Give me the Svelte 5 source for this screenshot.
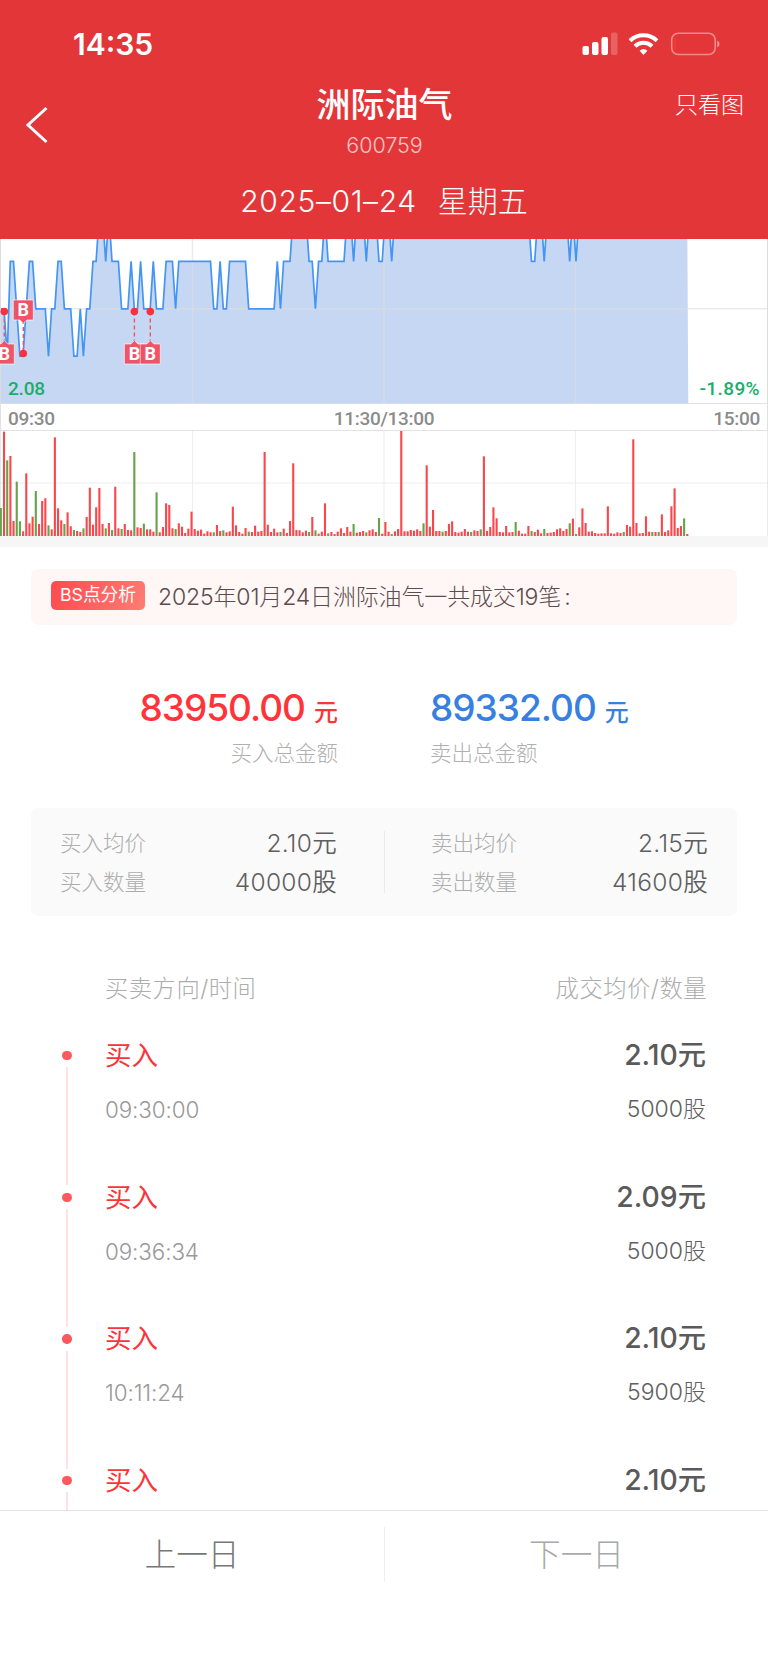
<script lang="ts">
    type Trade = { side: string, price: string, time?: string, amount?: string };

    const STEP = 3.178;
    const BASE = 164.5;
    const LEVEL = 47.35;

    // [price in ticks above 2.08, minutes it held]
    const runs: [number, number][] = [
        [2, 2], [1, 1], [3, 2], [2, 1], [1, 2], [2, 1], [3, 2], [2, 4], [1, 1], [2, 2],
        [3, 2], [2, 3], [1, 2], [2, 1], [1, 1], [2, 2], [3, 2], [4, 2], [3, 1], [4, 1],
        [3, 3], [2, 3], [3, 1], [2, 2], [3, 1], [2, 3], [3, 1], [2, 3], [3, 3], [2, 1],
        [3, 11], [2, 2], [3, 1], [2, 2], [3, 6], [2, 9], [3, 1], [2, 1], [3, 3], [4, 5],
        [3, 2], [2, 1], [3, 2], [4, 1], [3, 6], [4, 2], [3, 1], [4, 3], [3, 1], [4, 3],
        [3, 2], [4, 2], [3, 1], [4, 43], [3, 2], [4, 2], [3, 1], [4, 7], [3, 1], [4, 1],
        [3, 1], [4, 35]
    ];

    // volume per minute, negative = falling minute
    const volumes = [
        -84, 313, -227, 240, 45, -163, -44, 14, 188, 38, 58, -135, 36, 105, 113, -32, 20, 296, 83, 47,
        -36, 71, 29, -18, 15, 12, -23, 57, 145, 34, 86, 144, 36, -23, 39, -18, 148, 23, -21, 36,
        18, 17, -252, 26, 24, -37, 20, 20, 13, -131, 11, 27, 98, 93, 23, -21, 38, 28, 9, 22,
        73, 21, 16, 19, 7, 14, 11, -11, 33, 15, -17, 11, 14, 88, 32, 12, 7, 24, -13, 12,
        31, 13, 15, 252, 34, 12, 22, 11, -12, 22, 9, 45, 218, 18, 17, 11, 16, -12, 57, -17,
        7, 13, 98, -8, 12, 6, 13, 23, 9, 27, 13, -36, 10, 12, 15, -11, 17, 20, 12, -54,
        7, 42, 13, -6, 14, 21, 315, 14, 14, 18, 16, 20, 15, -38, 212, 28, 78, 15, 15, -13,
        15, 36, 44, 12, 10, 13, 21, 13, -12, 17, 15, -20, 239, 15, 27, 86, 53, 12, 11, 30,
        11, 12, -42, 16, 7, 7, 30, -15, 12, 19, 8, -21, 9, 10, 12, 20, 23, 15, 21, -38,
        52, -6, 26, 83, 39, 13, 14, 9, 7, 8, 8, 89, 8, 7, 11, 9, -12, 33, 28, 290,
        39, 8, 9, 59, 13, -12, 12, -12, 65, 12, 17, 89, 143, 24, 30, -53, 6
    ];

    const ticks = runs.flatMap(([tick, count]) => Array(count).fill(tick) as number[]);
    const points = ticks.map((tick, i) => `${(0.8 + i * STEP).toFixed(1)},${(BASE - tick * LEVEL).toFixed(1)}`).join(' ');
    const endX = 688.3;

    const markers = [
        { x: 4.3, dot: 72.5, tag: 'below' },
        { x: 23.3, dot: 114.5, tag: 'above' },
        { x: 134.4, dot: 72.5, tag: 'below' },
        { x: 150.3, dot: 72.5, tag: 'below' }
    ];

    const totals = [
        { label: '买入总金额', value: '83950.00', kind: 'buy' },
        { label: '卖出总金额', value: '89332.00', kind: 'sell' }
    ];

    const stats = [
        [{ label: '买入均价', value: '2.10元' }, { label: '买入数量', value: '40000股' }],
        [{ label: '卖出均价', value: '2.15元' }, { label: '卖出数量', value: '41600股' }]
    ];

    const trades: Trade[] = [
        { side: '买入', time: '09:30:00', price: '2.10元', amount: '5000股' },
        { side: '买入', time: '09:36:34', price: '2.09元', amount: '5000股' },
        { side: '买入', time: '10:11:24', price: '2.10元', amount: '5900股' },
        { side: '买入', price: '2.10元' }
    ];
</script>

<div class="screen">
    <header>
        <div class="status">
            <span class="clock">14:35</span>
            <svg class="status-icons" width="138" height="24" viewBox="0 0 138 24">
                <g fill="#fff">
                    <rect x="1.5" y="14" width="6.5" height="9" rx="2" />
                    <rect x="11" y="10" width="6.5" height="13" rx="2" />
                    <rect x="20.5" y="5" width="6.5" height="18" rx="2" />
                    <rect x="30" y="0.5" width="6.5" height="22.5" rx="2" opacity="0.22" />
                    <path d="M62.500 23 L58.600 18.700 A6 6 0 0 1 66.400 18.700 Z" />
                </g>
                <g fill="none" stroke="#fff" stroke-width="4">
                    <path d="M49 8.800 A19.500 19.500 0 0 1 76 8.800" />
                    <path d="M54 14.200 A12.200 12.200 0 0 1 71 14.200" />
                </g>
                <rect x="90.700" y="1.200" width="43.500" height="21.300" rx="6.500" fill="none" stroke="#fff" stroke-opacity="0.42" stroke-width="1.600" />
                <path d="M93.500 6 Q92.600 12 93.500 18 L94.700 18 L94.700 6 Z" fill="#ff3b30" />
                <path d="M136.300 8.500 Q138.500 9.500 138.500 12 Q138.500 14.500 136.300 15.500 Z" fill="#fff" fill-opacity="0.5" />
            </svg>
        </div>
        <div class="nav">
            <svg class="back" width="24" height="38" viewBox="0 0 24 38">
                <path d="M21.500 2 L3 19 L21.500 36" fill="none" stroke="#fff" stroke-width="3" />
            </svg>
            <div class="title">
                <h1>洲际油气</h1>
                <span class="code">600759</span>
            </div>
            <span class="only-chart">只看图</span>
        </div>
        <div class="date"><span class="day">2025–01–24</span><span>星期五</span></div>
    </header>

    <section class="chart">
        <div class="price">
            <svg width="768" height="165" viewBox="0 0 768 165">
                <polygon points="0.8,{BASE} {points} {endX},{BASE}" fill="#c6d7f4" />
                <path d="M0 69.800H768 M192.500 0V165 M384 0V165 M575.500 0V165" stroke="#ddd" stroke-opacity="0.6" stroke-width="1.500" />
                <polyline {points} fill="none" stroke="#4496f2" stroke-width="1.700" />
                <path d="M0.500 0V165 M767.500 0V165" stroke="#dcdcdc" />
                {#each markers as m}
                    {@const below = m.tag === 'below'}
                    {@const top = below ? 105 : 61}
                    <path d="M{m.x} {below ? m.dot : top + 20}V{below ? top : m.dot}" stroke="#f2525f" stroke-width="1.400" stroke-dasharray="4 3" />
                    <path d={below
                        ? `M${m.x - 10} ${top}h6.500l3.500 -3.500l3.500 3.500h6.500v20h-20z`
                        : `M${m.x - 10} ${top}h20v20h-6.500l-3.500 3.500l-3.500 -3.500h-6.500z`} fill="#f04e60" fill-opacity="0.95" stroke="#fff" stroke-opacity="0.6" stroke-width="1" />
                    <text class="tag" x={m.x} y={top + 16}>B</text>
                    <circle cx={m.x} cy={m.dot} r="3.800" fill="#fb303f" />
                {/each}
            </svg>
            <span class="low">2.08</span>
            <span class="percent">-1.89%</span>
        </div>
        <div class="axis"><span>09:30</span><span>11:30/13:00</span><span>15:00</span></div>
        <svg class="volume" width="768" height="105" viewBox="0 0 768 315" preserveAspectRatio="none">
            <path d="M0 156H768" stroke="#eee" stroke-width="3" />
            <path d="M192.500 0V315 M384 0V315 M575.500 0V315" stroke="#eee" stroke-width="1.200" />
            <path d="M0.500 0V315 M767.500 0V315" stroke="#dcdcdc" />
            {#each volumes as v, i}
                <rect x={i * STEP - 0.2} y={315 - Math.abs(v)} width="2.100" height={Math.abs(v)} fill={v < 0 ? '#65a34a' : '#f9474c'} />
            {/each}
        </svg>
    </section>

    <main>
        <div class="notice">
            <span class="badge">BS点分析</span>
            <span class="notice-text">2025年01月24日洲际油气一共成交19笔<i>:</i></span>
        </div>

        <div class="totals">
            {#each totals as total}
                <div class="total {total.kind}">
                    <div class="money"><span class="num">{total.value}</span><span class="unit">元</span></div>
                    <div class="total-label">{total.label}</div>
                </div>
            {/each}
        </div>

        <div class="stats">
            {#each stats as column}
                <div class="stat-column">
                    {#each column as stat}
                        <div class="stat"><span class="stat-label">{stat.label}</span><span class="stat-value">{stat.value}</span></div>
                    {/each}
                </div>
            {/each}
        </div>

        <div class="list-head"><span>买卖方向/时间</span><span>成交均价/数量</span></div>
        <div class="trades">
            {#each trades as trade}
                <div class="trade">
                    <div class="rail"><span class="dot"></span><span class="line"></span></div>
                    <div class="left">
                        <div class="side">{trade.side}</div>
                        {#if trade.time}<div class="time">{trade.time}</div>{/if}
                    </div>
                    <div class="right">
                        <div class="deal">{trade.price}</div>
                        {#if trade.amount}<div class="amount">{trade.amount}</div>{/if}
                    </div>
                </div>
            {/each}
        </div>
    </main>

    <footer>
        <button>上一日</button>
        <button class="disabled">下一日</button>
    </footer>
</div>

<style>
    :global(body) { margin: 0; background: #fff; }

    .screen {
        width: 768px;
        height: 1662px;
        display: flex;
        flex-direction: column;
        overflow: hidden;
        background: #fff;
        font-family: Inter, "Noto Sans CJK SC", sans-serif;
        font-weight: 300;
    }

    header {
        height: 239px;
        flex-shrink: 0;
        background: #e33638;
        color: #fff;
    }
    .status {
        height: 88px;
        box-sizing: border-box;
        padding: 0 49px 0 73px;
        display: flex;
        align-items: center;
        justify-content: space-between;
    }
    .clock { font-size: 30px; font-weight: 600; line-height: 30px; }
    .status-icons { overflow: visible; }
    .nav {
        height: 82px;
        padding: 0 24px 0 25px;
        display: grid;
        grid-template-columns: 1fr 200px 1fr;
    }
    .back { margin-top: 18px; }
    .title { text-align: center; }
    h1 { margin: 0; font-size: 34px; font-weight: 500; line-height: 34px; }
    .code { display: block; margin-top: 10px; font-size: 21.5px; line-height: 26px; opacity: 0.7; }
    .only-chart { justify-self: end; font-size: 23px; line-height: 34px; }
    .date {
        display: flex;
        justify-content: center;
        gap: 21px;
        font-size: 30px;
        line-height: 62px;
    }
    .day { letter-spacing: 0.6px; }

    .chart { flex-shrink: 0; border-bottom: 11px solid #f6f6f6; }
    .price { position: relative; height: 164px; }
    .price svg, .volume { display: block; }
    .tag { font: 700 18px Roboto, sans-serif; fill: #fff; text-anchor: middle; }
    .low, .percent {
        position: absolute;
        bottom: 3px;
        font: 500 19px/22px Roboto, sans-serif;
        color: #18ae6b;
    }
    .low { left: 8px; letter-spacing: -0.2px; }
    .percent { right: 8px; letter-spacing: 0.4px; }
    .axis {
        height: 28px;
        box-sizing: border-box;
        padding: 0 7px;
        display: grid;
        grid-template-columns: 1fr auto 1fr;
        border: 1px solid #e2e2e2;
        font: 500 19px/29px Roboto, sans-serif;
        letter-spacing: -0.3px;
        color: #8b8b8b;
    }
    .axis span:last-child { text-align: right; }

    main { flex: 1; min-height: 0; overflow: hidden; }
    .notice {
        height: 56px;
        box-sizing: border-box;
        margin: 22px 31px 0;
        padding: 0 20px 4px;
        display: flex;
        align-items: center;
        border-radius: 7px;
        background: #fff7f6;
    }
    .badge {
        width: 94px;
        height: 29px;
        margin-right: 13px;
        border-radius: 5px;
        background: linear-gradient(110deg, #ff4a4d, #ff7c75);
        color: #fff;
        font-size: 17.7px;
        font-weight: 400;
        line-height: 28px;
        text-align: center;
    }
    .notice-text { font-size: 23px; letter-spacing: -0.15px; color: #5d4c4c; }
    i { font-style: normal; margin-left: 3px; }

    .totals {
        margin-top: 64px;
        display: grid;
        grid-template-columns: 338px 338px;
        column-gap: 92px;
    }
    .buy { text-align: right; color: #fd3439; }
    .sell { color: #377fe0; }
    .money { height: 38px; line-height: 38px; white-space: nowrap; }
    .num { font-size: 37px; font-weight: 450; letter-spacing: -1px; }
    .unit { margin-left: 9px; font-size: 24px; font-weight: 500; }
    .total-label { margin-top: 10px; font-size: 21.5px; line-height: 32px; color: #b0b0b0; }

    .stats {
        height: 108px;
        box-sizing: border-box;
        margin: 39px 31px 0;
        padding: 16px 29px 14px;
        display: grid;
        grid-template-columns: 1fr 1fr;
        column-gap: 94px;
        position: relative;
        border-radius: 7px;
        background: #fafafa;
    }
    .stats::after {
        content: '';
        position: absolute;
        left: 353px;
        top: 23px;
        width: 1px;
        height: 62px;
        background: #eaeaea;
    }
    .stat { display: flex; justify-content: space-between; height: 39px; line-height: 39px; }
    .stat-label { font-size: 21.5px; color: #adadad; }
    .stat-value { font-size: 24.5px; font-weight: 350; letter-spacing: 0.3px; color: #5f5f5f; }

    .list-head {
        margin: 57px 61px 0 105px;
        display: flex;
        justify-content: space-between;
        font-size: 23.3px;
        line-height: 32px;
        letter-spacing: 0.5px;
        color: #adadad;
    }
    .trades { padding: 31px 62px 0 62px; }
    .trade { height: 141.7px; display: flex; }
    .rail {
        width: 10px;
        margin: 15px 33px 0 0;
        display: flex;
        flex-direction: column;
        align-items: center;
    }
    .dot { flex-shrink: 0; width: 9.4px; height: 9.4px; border-radius: 50%; background: #fc595f; }
    .line { flex-shrink: 0; width: 2px; height: 118px; margin-top: 7px; background: #ffe1e5; }
    .left { flex: 1; }
    .right { text-align: right; }
    .side { font-size: 26.5px; font-weight: 400; line-height: 38px; color: #fb3439; }
    .time { margin-top: 18px; font-size: 22.4px; line-height: 35px; letter-spacing: -0.1px; color: #999; }
    .deal { font-size: 28.3px; font-weight: 500; line-height: 38px; color: #5a5a5a; }
    .amount { margin-top: 18px; font-size: 23px; line-height: 35px; color: #606060; }

    footer {
        height: 152px;
        box-sizing: border-box;
        flex-shrink: 0;
        padding-top: 16px;
        display: grid;
        grid-template-columns: 384px 384px;
        align-items: start;
        border-top: 1px solid #e4e4e4;
        background: #fff;
    }
    button {
        height: 55px;
        padding: 0;
        border: 0;
        background: none;
        font: inherit;
        font-size: 31.7px;
        line-height: 55px;
        color: #777;
    }
    button + button { border-left: 1px solid #eee; }
    .disabled { color: #a9a9a9; }
</style>
